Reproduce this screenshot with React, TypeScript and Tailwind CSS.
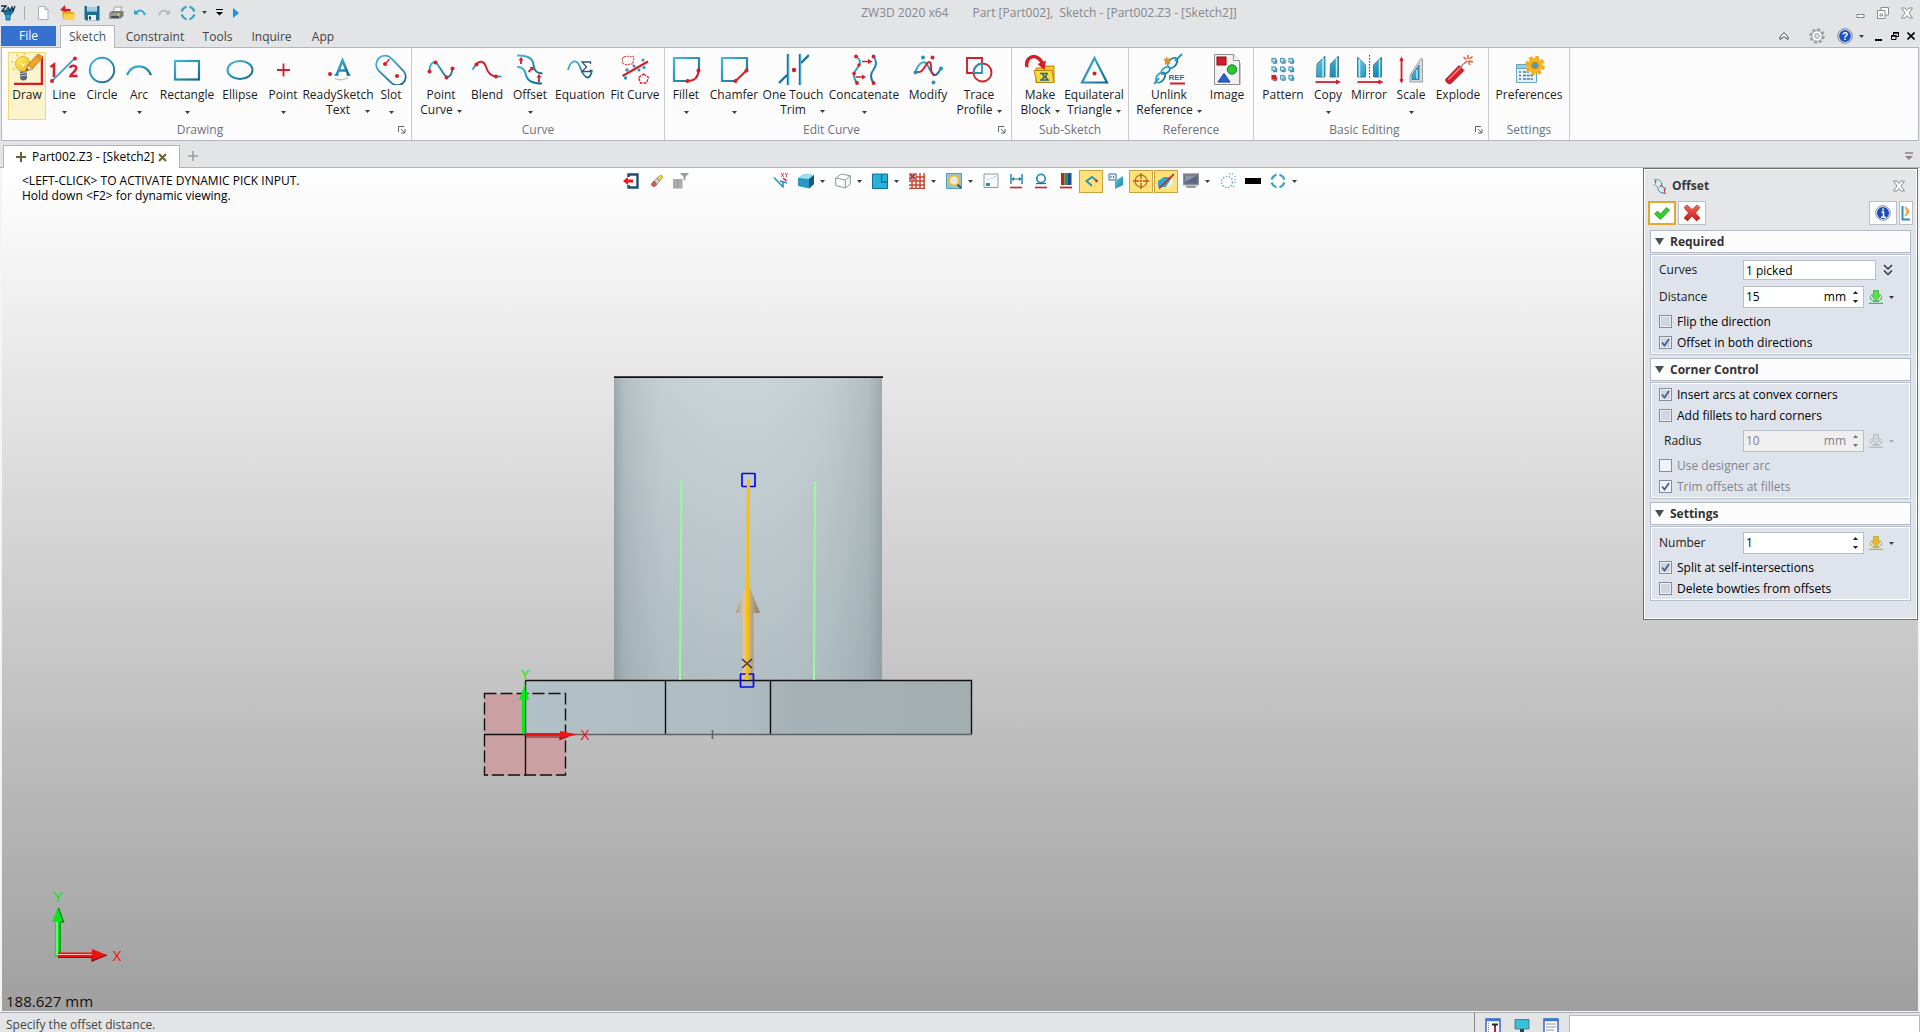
import React from "react";

type IconProps = { children: React.ReactNode; size?: string; box?: string };

const Icon = ({ children, size = "h-8 w-8", box = "0 0 32 32" }: IconProps) => (
  <svg viewBox={box} className={`${size} shrink-0`} fill="none" aria-hidden="true">
    {children}
  </svg>
);

const Caret = ({ className = "" }: { className?: string }) => (
  <svg viewBox="0 0 5 3" className={`h-[3px] w-[5px] shrink-0 ${className}`} aria-hidden="true">
    <path d="M0 0h5L2.500 3z" fill="#3c3c3c" />
  </svg>
);

const T = "#2b93b8";
const D = "#1f7496";
const R = "#d31f2b";

const GradientDefs = () => (
  <svg className="absolute h-0 w-0" aria-hidden="true">
    <defs>
      <linearGradient id="teal" x1="0" y1="0" x2="1" y2="1">
        <stop offset="0" stopColor="#3fb9df" />
        <stop offset="1" stopColor="#17678b" />
      </linearGradient>
      <linearGradient id="cyanFill" x1="0" y1="0" x2="1" y2="1">
        <stop offset="0" stopColor="#63cdea" />
        <stop offset="1" stopColor="#0f80aa" />
      </linearGradient>
      <linearGradient id="yellowFill" x1="0" y1="0" x2="1" y2="1">
        <stop offset="0" stopColor="#fff26b" />
        <stop offset="1" stopColor="#eeb51c" />
      </linearGradient>
      <linearGradient id="redFill" x1="0" y1="0" x2="0" y2="1">
        <stop offset="0" stopColor="#f76a5c" />
        <stop offset="1" stopColor="#c81414" />
      </linearGradient>
    </defs>
  </svg>
);

/* ---------- ribbon icons ---------- */

const DrawIcon = () => (
  <Icon>
    <path d="M3 31h28V3" stroke={R} strokeWidth="2.500" />
    <path d="M7 3.500L5.500 1M13 2l.5-2M3 9H0M4 15l-2.500 1.500M21 7l2-1" stroke="#f0c419" strokeWidth="1.200" />
    <circle cx="12" cy="11" r="7.500" fill="url(#yellowFill)" stroke="#d9a514" strokeWidth=".8" />
    <path d="M9 18.500h7V24a3.500 3.500 0 0 1-7 0z" fill="#5b6670" />
    <path d="M9 20.500l7-1M9 23l7-1" stroke="#b9c2c8" />
    <path d="M15 18l2-6L27 1l5 3-11 12z" fill="#f4a322" stroke="#b4651a" strokeWidth=".8" />
    <path d="M15 18l2-6 5 4z" fill="#f7d9a8" stroke="#a46a24" strokeWidth=".6" />
    <path d="M27 1l5 3-2.500 3-5-3.200z" fill="#e88d2a" />
    <path d="M15 18l1-2.500 1.500 1.200z" fill="#333" />
    <path d="M10 10l2 3 2-3" stroke="#fffbd8" strokeWidth="1.200" />
  </Icon>
);

const LineIcon = () => (
  <Icon>
    <path d="M4 28L27 5" stroke={T} strokeWidth="1.600" />
    <circle cx="4" cy="28" r="2" fill={R} />
    <circle cx="27" cy="5.500" r="2" fill={R} />
    <path d="M2.500 14l3.500-2.500V24" stroke={R} strokeWidth="2.600" />
    <path d="M22 15c1-3.500 6.500-3 6.200.4C28 18 24 20 22.500 23H29.500" stroke={R} strokeWidth="2.400" />
  </Icon>
);

const CircleIcon = () => (
  <Icon><circle cx="16" cy="17" r="12.200" stroke="url(#teal)" strokeWidth="2" /></Icon>
);
const ArcIcon = () => (
  <Icon><path d="M4 22C9 10.500 23 10.500 28 22" stroke="url(#teal)" strokeWidth="2.200" /></Icon>
);
const RectIcon = () => (
  <Icon><rect x="4" y="8" width="24" height="18.500" stroke="url(#teal)" strokeWidth="2.200" /></Icon>
);
const EllipseIcon = () => (
  <Icon><ellipse cx="16" cy="17" rx="12.500" ry="9" stroke="url(#teal)" strokeWidth="2" /></Icon>
);
const PointIcon = () => (
  <Icon><path d="M10 17h13M16.500 10.500v13" stroke={R} strokeWidth="1.800" /></Icon>
);
const ReadyTextIcon = () => (
  <Icon>
    <circle cx="8" cy="21" r="2" fill={R} />
    <path d="M14.500 22L20.500 7.500L26.500 22M16.500 17.500h8" stroke="url(#teal)" strokeWidth="2.600" />
    <path d="M12.500 22h4M24.500 22h4" stroke={D} strokeWidth="1.500" />
    <path d="M13 25.500c5 2.500 9 1.500 13-1" stroke="#b8b8b8" strokeWidth="1.200" />
  </Icon>
);
const SlotIcon = () => (
  <Icon>
    <path d="M3.500 17.500A8.200 8.200 0 0 1 16.500 5.500L28.500 18A8.200 8.200 0 0 1 16 29.500z" stroke="url(#teal)" strokeWidth="1.800" />
    <circle cx="10" cy="11" r="2" fill={R} />
    <circle cx="22" cy="23" r="2" fill={R} />
    <path d="M11 10l3.500-4" stroke={R} strokeWidth="1.200" />
  </Icon>
);
const PointCurveIcon = () => (
  <Icon>
    <path d="M4.500 18C5 8 10 7.500 13 12S20 24.500 22.500 24S27 20 27.500 15.500" stroke="url(#teal)" strokeWidth="2" />
    <circle cx="4.500" cy="18.500" r="2" fill={R} /><circle cx="10.500" cy="9.500" r="2" fill={R} />
    <circle cx="21.500" cy="24.500" r="2" fill={R} /><circle cx="27.500" cy="15.500" r="2" fill={R} />
  </Icon>
);
const BlendIcon = () => (
  <Icon>
    <path d="M1.500 16.500L5 11.500" stroke={T} strokeWidth="1.800" />
    <path d="M25 23.500h5.500" stroke={T} strokeWidth="1.800" />
    <path d="M5 11.500C9 7 13 8 15 14s5 9.500 10.500 9.500" stroke={R} strokeWidth="2" />
    <circle cx="5.500" cy="11.500" r="2" fill={R} /><circle cx="25" cy="23.500" r="2" fill={R} />
  </Icon>
);
const OffsetIcon = ({ size }: { size?: string }) => (
  <Icon size={size}>
    <path d="M3 2.500C14 2 19 6 19.500 12S23 20.500 28.500 20.500" stroke="url(#teal)" strokeWidth="2" />
    <path d="M3 14C9 13.500 11 17 12 22s5 8.500 16 8.500" stroke="url(#teal)" strokeWidth="2" />
    <path d="M7 11V6M14.500 19l4-4M25 29v-6" stroke={R} strokeWidth="1.800" />
    <path d="M4.500 7.500L7 4l2.500 3.500zM15.500 14h4v4zM22.500 24.500L25 21l2.500 3.500z" fill={R} />
  </Icon>
);
const EquationIcon = () => (
  <Icon>
    <path d="M4 17C7 6 13 6.500 15.500 13S21 24.500 23.500 24.500S27.500 20 28 17" stroke="url(#teal)" strokeWidth="1.800" />
    <path d="M26.500 11V9H18l4.500 5L18 18.500h8.500v-2" stroke="#33566e" strokeWidth="1.300" />
  </Icon>
);
const FitCurveIcon = () => (
  <Icon>
    <path d="M3.500 23L29 8.500" stroke={R} strokeWidth="2.200" />
    <path d="M5 4l3-1 3 1 3-1 1 3-1 2 0 3-3 0-3 1-3-1-2-1 1-3-1-2z" stroke={R} strokeWidth="1" strokeDasharray="2 1" />
    <path d="M24.500 21l5 3.500-2 5.500h-6l-2-5.500z" stroke={R} strokeWidth="1.300" strokeDasharray="3 1" />
    <g fill={T}>
      <circle cx="8" cy="17" r="1.700" /><circle cx="6.500" cy="25" r="1.700" /><circle cx="15" cy="13" r="1.500" />
      <circle cx="24" cy="7" r="1.500" /><circle cx="20" cy="17" r="1.500" /><circle cx="25" cy="14.500" r="1.500" />
    </g>
  </Icon>
);
const FilletIcon = () => (
  <Icon>
    <path d="M17.500 28H4V5h25v13" stroke="url(#teal)" strokeWidth="2.200" />
    <path d="M17 28c7 0 11.500-3 11.500-11" stroke={R} strokeWidth="2" />
    <circle cx="17.500" cy="28" r="2" fill={R} /><circle cx="28.500" cy="17.500" r="2" fill={R} />
  </Icon>
);
const ChamferIcon = () => (
  <Icon>
    <path d="M17.500 28H4V5h25v13" stroke="url(#teal)" strokeWidth="2.200" />
    <path d="M17.500 28l11-10.500" stroke={R} strokeWidth="2" />
    <circle cx="17.500" cy="28" r="2" fill={R} /><circle cx="28.500" cy="17.500" r="2" fill={R} />
  </Icon>
);
const TrimIcon = () => (
  <Icon>
    <path d="M11 1v31M23 1v31M2 30l8-8M24 10l8-8" stroke={D} strokeWidth="2.400" />
    <path d="M11.500 1v31M23.500 1v31" stroke="#57c3e2" strokeWidth=".7" />
    <circle cx="17" cy="17" r="2.200" fill={R} />
  </Icon>
);
const ConcatenateIcon = () => (
  <Icon>
    <path d="M8 3.500c4 3 5 5 3 9s-5 5-5 9 1 6 3 8.500M25.500 3.500c4 5 3 9 0 13s-4 8 0 13.500" stroke="url(#teal)" strokeWidth="2" />
    <path d="M14 8.500h8M8 24h7" stroke={R} strokeWidth="1.500" />
    <path d="M20 6l4.500 2.500L20 11zM14 21.500l4 2.500-4 2.500z" fill={R} />
    <g fill={R}>
      <circle cx="8" cy="3.500" r="1.900" /><circle cx="25.500" cy="3.500" r="1.900" /><circle cx="11" cy="12" r="1.800" />
      <circle cx="6" cy="20.500" r="1.800" /><circle cx="9" cy="30" r="1.900" /><circle cx="25.500" cy="30" r="1.900" />
    </g>
  </Icon>
);
const ModifyIcon = () => (
  <Icon>
    <path d="M3.500 19C7 8 13 7 16 13s6 11 9 8 3-4 4-6" stroke="url(#teal)" strokeWidth="2" />
    <path d="M4.500 19C9 20 11 17 14 12s5-3 5 1 0 7 3.500 10" stroke={R} strokeWidth="1.800" />
    <g fill={T}>
      <circle cx="11" cy="4.500" r="2" /><circle cx="3.500" cy="19.500" r="2" /><circle cx="29" cy="15.500" r="2" /><circle cx="21.500" cy="29.500" r="2" />
    </g>
    <circle cx="20.500" cy="4.500" r="2" fill={R} />
  </Icon>
);
const TraceIcon = () => (
  <Icon>
    <path d="M19 10.500V5H4v15h6" stroke={R} strokeWidth="1.900" />
    <circle cx="19.500" cy="19.500" r="9" stroke={R} strokeWidth="1.900" />
    <path d="M19 10.500V20h-8.500c0-5 4-9.500 8.500-9.500z" stroke={T} strokeWidth="1.800" />
  </Icon>
);
const BlockIcon = () => (
  <Icon>
    <path d="M12 15h6v-2h12v16.500H12z" fill="#f6c520" stroke="#b5860f" />
    <path d="M10 17.500h18l2 12H13z" fill="#ffd83a" stroke="#b5860f" />
    <path d="M16 20.500h8M16 27h9M18.500 20.500c0 4 5 3 5 6.500M23 20.500c0 4-5 3-5 6.500" stroke="#1e6e92" strokeWidth="1.500" />
    <path d="M3 14C1 5 9 1.500 14 5c3 2 4 4 4.500 6" stroke={R} strokeWidth="3.400" />
    <path d="M13.500 11l7 6L22 7.500z" fill={R} />
  </Icon>
);
const TriangleIcon = () => (
  <Icon>
    <path d="M16.500 5L29 29.500H4z" stroke="url(#teal)" strokeWidth="2.200" />
    <circle cx="16.500" cy="20.500" r="2" fill={R} />
  </Icon>
);
const UnlinkIcon = () => (
  <Icon>
    <g stroke="url(#teal)" strokeWidth="1.800">
      <ellipse cx="7.500" cy="24.500" rx="6" ry="3.600" transform="rotate(-50 7.500 24.500)" />
      <ellipse cx="12.500" cy="17.500" rx="5" ry="2.800" transform="rotate(-35 12.500 17.500)" />
      <ellipse cx="19.500" cy="10" rx="6" ry="3.800" transform="rotate(-50 19.500 10)" />
      <path d="M22 8l7-7" /><path d="M1 31l5-6" />
    </g>
    <path d="M13.500 3l1.500 3 3-1.500-1.500 3.500 1 3-3.500-.5-2 2v-4l-2-3 3 .5z" fill="#f28a1e" />
    <text x="15.500" y="27" fontFamily="Liberation Sans" fontWeight="700" fontSize="8" fill={D}>REF</text>
    <path d="M17 30.500h15" stroke={R} strokeWidth="2" />
  </Icon>
);
const ImageIcon = () => (
  <Icon>
    <path d="M3.500 1.500h19l6 6v24h-25z" fill="#f2f2f2" stroke="#8f8f8f" />
    <path d="M22.500 1.500v6h6" fill="#fff" stroke="#8f8f8f" />
    <path d="M29.500 10v22.500h-23" stroke="#c9c9c9" />
    <rect x="6" y="4" width="9" height="8" fill="#cf1e2c" stroke="#8e1019" />
    <circle cx="21" cy="16.500" r="4.700" fill="#2bc636" stroke="#16801e" />
    <path d="M13 20.500l6 8.500H7z" fill="#2b63d0" stroke="#163f94" />
  </Icon>
);
const PatternIcon = () => (
  <Icon>
    {[0, 1, 2].map((r) =>
      [0, 1, 2].map((c) => {
        const hot = r === 2 && c === 0;
        return (
          <g key={`${r}${c}`}>
            <rect x={5 + c * 8.5} y={5.5 + r * 8.5} width="3.500" height="3.500" fill={hot ? R : "#c5ebf8"} stroke={hot ? R : "#4f9fba"} strokeWidth="1.200" />
            <path d={`M${6 + c * 8.5} ${10.2 + r * 8.5}h3.700v-3.700`} stroke={hot ? "#a31620" : "#35718a"} strokeWidth="1" />
          </g>
        );
      })
    )}
  </Icon>
);
const CopyIcon = () => (
  <Icon>
    <path d="M5 11l8-8v21H4.500zM18.500 11l8-8v21h-8.500z" fill="url(#cyanFill)" stroke="#2c7089" strokeWidth=".8" />
    <path d="M11 5v19M24.500 5v19" stroke="#bfeaf7" strokeWidth="1.500" />
    <path d="M3.500 29h22" stroke={R} strokeWidth="1.800" />
    <path d="M24 26.500l5 2.500-5 2.500z" fill={R} />
  </Icon>
);
const MirrorIcon = () => (
  <Icon>
    <path d="M4.500 4l8 8v12h-8zM28.500 4l-8 8v12h8z" fill="url(#cyanFill)" stroke="#2c7089" strokeWidth=".8" />
    <path d="M6.500 6.500V24M26.500 6.500V24" stroke="#bfeaf7" strokeWidth="1.500" />
    <path d="M16.500 2v24" stroke="#333" strokeDasharray="1.500 1.500" />
    <path d="M4.500 29h22" stroke={R} strokeWidth="1.800" />
    <path d="M25.500 26.500l5 2.500-5 2.500z" fill={R} />
  </Icon>
);
const ScaleIcon = () => (
  <Icon>
    <path d="M6.500 5v24" stroke={R} strokeWidth="1.800" />
    <path d="M4.500 8l2-4.500 2 4.500zM4.500 26l2 4.500 2-4.500z" fill={R} />
    <path d="M26 5.500L15 22v7h12.500V6z" fill="#d4d8da" stroke="#9aa2a6" />
    <path d="M24 12l-7 10v4.500h7z" fill="url(#cyanFill)" stroke="#2c7089" strokeWidth=".8" />
    <path d="M22 17v9" stroke="#bfeaf7" strokeWidth="1.400" />
  </Icon>
);
const ExplodeIcon = () => (
  <Icon>
    <path d="M4 26L17 12.500l5 5L9 30.500c-2 1.500-6.500-2-5-4.500z" fill="#d8202c" stroke="#8e1019" strokeWidth=".8" />
    <path d="M6.500 26.500l12-12" stroke="#ff8a86" strokeWidth="1.400" />
    <path d="M19 14.500c1-3 2-4 4.500-5" stroke="#777" strokeWidth="1.200" />
    <path d="M26 2v4M30.500 3.500L27.500 6M31 9l-4-1M28 12l-2-4M21.500 4l3 2.500M23 10l2-2" stroke="#f0562a" strokeWidth="1.500" />
  </Icon>
);
const PreferencesIcon = () => (
  <Icon>
    <path d="M3.500 11.500h20v18h-20z" fill="#e4f3fa" stroke="#6aa6c0" />
    <path d="M3.500 11.500h20v4h-20z" fill="#8fd0ea" stroke="#6aa6c0" />
    <path d="M6 19h2M6 22.500h2M6 26h2M10 19h6M10 22.500h10M10 26h10" stroke="#537a95" strokeWidth="1.600" strokeDasharray="3 .8" />
    <circle cx="22" cy="12.500" r="8" stroke="#f2aa1b" strokeWidth="3.500" strokeDasharray="3.800 2.480" />
    <circle cx="22" cy="12.500" r="5.300" fill="#fff" stroke="#f6b21f" strokeWidth="4.500" />
    <circle cx="22" cy="12.500" r="3.200" fill="#4aa0c6" stroke="#c87e10" strokeWidth=".8" />
  </Icon>
);

/* ---------- ribbon ---------- */

type Tool = {
  name: string;
  w: string;
  icon: React.ReactNode;
  second?: string;
  drop?: "below" | "inline" | "right";
  active?: boolean;
};

type Group = { name: string; w: string; pad: string; launcher?: boolean; tools: Tool[] };

const groups: Group[] = [
  {
    name: "Drawing", w: "w-[410px]", pad: "pl-[6px]", launcher: true,
    tools: [
      { name: "Draw", w: "w-[38px]", icon: <DrawIcon />, active: true },
      { name: "Line", w: "w-9", icon: <LineIcon />, drop: "below" },
      { name: "Circle", w: "w-10", icon: <CircleIcon /> },
      { name: "Arc", w: "w-[34px]", icon: <ArcIcon />, drop: "below" },
      { name: "Rectangle", w: "w-[62px]", icon: <RectIcon />, drop: "below" },
      { name: "Ellipse", w: "w-11", icon: <EllipseIcon /> },
      { name: "Point", w: "w-[42px]", icon: <PointIcon />, drop: "below" },
      { name: "ReadySketch", w: "w-[68px]", icon: <ReadyTextIcon />, second: "Text", drop: "right" },
      { name: "Slot", w: "w-[38px]", icon: <SlotIcon />, drop: "below" },
    ],
  },
  {
    name: "Curve", w: "w-[253px]", pad: "pl-[7px]",
    tools: [
      { name: "Point", w: "w-11", icon: <PointCurveIcon />, second: "Curve", drop: "inline" },
      { name: "Blend", w: "w-12", icon: <BlendIcon /> },
      { name: "Offset", w: "w-[38px]", icon: <OffsetIcon />, drop: "below" },
      { name: "Equation", w: "w-[62px]", icon: <EquationIcon /> },
      { name: "Fit Curve", w: "w-12", icon: <FitCurveIcon /> },
    ],
  },
  {
    name: "Edit Curve", w: "w-[347px]", pad: "pl-[5px]", launcher: true,
    tools: [
      { name: "Fillet", w: "w-8", icon: <FilletIcon />, drop: "below" },
      { name: "Chamfer", w: "w-16", icon: <ChamferIcon />, drop: "below" },
      { name: "One Touch", w: "w-[54px]", icon: <TrimIcon />, second: "Trim", drop: "right" },
      { name: "Concatenate", w: "w-[88px]", icon: <ConcatenateIcon />, drop: "below" },
      { name: "Modify", w: "w-10", icon: <ModifyIcon /> },
      { name: "Trace", w: "w-[62px]", icon: <TraceIcon />, second: "Profile", drop: "inline" },
    ],
  },
  {
    name: "Sub-Sketch", w: "w-[117px]", pad: "pl-[6px]",
    tools: [
      { name: "Make", w: "w-11", icon: <BlockIcon />, second: "Block", drop: "inline" },
      { name: "Equilateral", w: "w-16", icon: <TriangleIcon />, second: "Triangle", drop: "inline" },
    ],
  },
  {
    name: "Reference", w: "w-[125px]", pad: "pl-[6px]",
    tools: [
      { name: "Unlink", w: "w-[68px]", icon: <UnlinkIcon />, second: "Reference", drop: "inline" },
      { name: "Image", w: "w-12", icon: <ImageIcon /> },
    ],
  },
  {
    name: "Basic Editing", w: "w-[235px]", pad: "pl-[3px]", launcher: true,
    tools: [
      { name: "Pattern", w: "w-[52px]", icon: <PatternIcon /> },
      { name: "Copy", w: "w-[38px]", icon: <CopyIcon />, drop: "below" },
      { name: "Mirror", w: "w-11", icon: <MirrorIcon /> },
      { name: "Scale", w: "w-10", icon: <ScaleIcon />, drop: "below" },
      { name: "Explode", w: "w-[54px]", icon: <ExplodeIcon /> },
    ],
  },
  {
    name: "Settings", w: "w-[81px]", pad: "pl-0",
    tools: [{ name: "Preferences", w: "w-20", icon: <PreferencesIcon /> }],
  },
];

const ToolButton = ({ t }: { t: Tool }) => (
  <button
    type="button"
    className={`flex h-[68px] shrink-0 flex-col items-center leading-[15px] text-[#1c1c1c] ${t.w} ${
      t.active ? "border border-[#f3d778] bg-[#fdf3cd]" : "pt-px"
    }`}
  >
    {t.icon}
    <span className="mt-[2px] whitespace-nowrap">{t.name}</span>
    {t.drop === "below" && <Caret className="mt-[9px]" />}
    {t.drop === "inline" && (
      <span className="flex items-center gap-1 whitespace-nowrap">
        {t.second}
        <Caret className="mt-1" />
      </span>
    )}
    {t.drop === "right" && (
      <span className="grid w-16 grid-cols-[1fr_auto_1fr] items-center">
        <span />
        {t.second}
        <Caret className="mt-1 justify-self-end" />
      </span>
    )}
  </button>
);

const Ribbon = () => (
  <div className="mx-px flex h-[94px] shrink-0 border border-[#b3b7bd] bg-[#fcfcfc]">
    {groups.map((g) => (
      <section key={g.name} className={`flex shrink-0 flex-col border-r border-[#c8cacf] pt-[4px] ${g.w}`}>
        <div className={`flex ${g.pad}`}>
          {g.tools.map((t) => (
            <ToolButton key={t.name} t={t} />
          ))}
        </div>
        <div className="mt-[2px] flex items-center leading-[15px] text-[#6b7284]">
          <span className="flex-1 text-center">{g.name}</span>
          {g.launcher && (
            <button type="button" aria-label={`${g.name} options`} className="mr-[5px] flex w-2 justify-center">
              <Icon size="h-2 w-2" box="0 0 8 8">
                <path d="M.5 6V.5H6M3 3l3.500 3.500M7 3v4H3" stroke="#5b5f66" />
              </Icon>
            </button>
          )}
        </div>
      </section>
    ))}
  </div>
);

/* ---------- title bar ---------- */

const Brackets = () => (
  <Icon size="h-4 w-4" box="0 0 16 16">
    <path d="M1.500 6.500C2.500 4 4 2.500 6.500 1.500M9.500 1.500C12 2.500 13.500 4 14.500 6.500M14.500 9.500C13.500 12 12 13.500 9.500 14.500M6.500 14.500C4 13.500 2.500 12 1.500 9.500" stroke="#3aa5c8" strokeWidth="2.200" />
  </Icon>
);

const OutlineX = () => (
  <Icon size="h-3 w-3" box="0 0 12 12">
    <path d="M.5 1h3.500L6 3.500 8 1h3.500L8 6l3.500 5H8L6 8.500 4 11H.5L4 6z" fill="#fff" stroke="#8b8b8b" />
  </Icon>
);

const TitleBar = () => (
  <header className="flex h-[25px] shrink-0 items-center">
    <div className="flex h-6 w-[245px] shrink-0 items-center">
      <Icon size="h-4 w-4" box="0 0 16 16">
        <path d="M1 3l4 4 2-5 3 4 5-3-2 5-4 3-5-2z" fill="#1a79a8" />
        <path d="M1 1h5L2 6h5M8 2l2 4 2-4 1 4 2-5" stroke="#0e2f4a" strokeWidth="1.300" />
        <path d="M5 9h6l-1 3v3H6v-3z" fill="#2aa7d8" stroke="#0e4a70" strokeWidth=".8" />
      </Icon>
      <span className="ml-2 h-[14px] w-px bg-[#a9adb3]" />
      <button type="button" aria-label="New" className="ml-[10px] w-4">
        <Icon size="h-4 w-4" box="0 0 16 16">
          <path d="M3.500 1.500h6.500l3 3v10H3.500z" fill="#fff" stroke="#a9b0b8" />
          <path d="M10 1.500v3h3" stroke="#a9b0b8" />
        </Icon>
      </button>
      <button type="button" aria-label="Open" className="ml-[9px] w-4">
        <Icon size="h-4 w-4" box="0 0 16 16">
          <path d="M2 6h5l1 1h6v7H3z" fill="#e9a51c" />
          <path d="M4 9h11.500L14 15H3z" fill="#ffd04a" />
          <path d="M10.500 5.500C8 5 6.500 4.500 5 5.500" stroke={R} strokeWidth="2.600" />
          <path d="M0 5l5-5 1 7z" fill={R} />
        </Icon>
      </button>
      <button type="button" aria-label="Save" className="ml-2 w-4">
        <Icon size="h-4 w-4" box="0 0 16 16">
          <path d="M.5 1h15v14.500H2L.5 14z" fill="#1c6d94" />
          <path d="M3 1h10v5.500H3z" fill="#cfe2ec" /><path d="M3.500 3h9M3.500 5h9" stroke="#8bb0c4" />
          <path d="M4 10h8v5.500H4z" fill="#e9eef1" /><path d="M5 11.500h2v3H5z" fill="#183c52" />
        </Icon>
      </button>
      <button type="button" aria-label="Print" className="ml-2 w-4">
        <Icon size="h-4 w-4" box="0 0 16 16">
          <path d="M5 7l2-5h7l-2 5z" fill="#f6f6f6" stroke="#8f8f8f" strokeWidth=".8" />
          <path d="M1 8l3-2h11.500v5L12 14H1z" fill="#7d7d7d" /><path d="M1 8h11v6H1z" fill="#989898" />
          <path d="M3 11h8v2H3z" fill="#4d4d4d" /><circle cx="10.500" cy="9.500" r="1" fill="#f3e234" />
        </Icon>
      </button>
      <button type="button" aria-label="Undo" className="ml-2 w-4">
        <Icon size="h-4 w-4" box="0 0 16 16">
          <path d="M4 8C6.500 4.500 11 4.500 13 10" stroke="#3ba3c6" strokeWidth="2" /><path d="M2 4.500v5h5z" fill="#3ba3c6" />
        </Icon>
      </button>
      <button type="button" aria-label="Redo" className="ml-2 w-4">
        <Icon size="h-4 w-4" box="0 0 16 16">
          <path d="M12 8C9.500 4.500 5 4.500 3 10" stroke="#b6b9bd" strokeWidth="2" /><path d="M14 4.500v5H9z" fill="#b6b9bd" />
        </Icon>
      </button>
      <button type="button" aria-label="Regenerate" className="ml-2 flex items-center gap-[6px]">
        <Brackets />
        <Caret />
      </button>
      <button type="button" aria-label="Customize" className="ml-[9px] w-[7px]">
        <Icon size="h-[7px] w-[7px]" box="0 0 7 7"><path d="M0 .5h7" stroke="#000" /><path d="M0 3h7L3.500 6.500z" fill="#000" /></Icon>
      </button>
      <button type="button" aria-label="Run" className="ml-[10px] w-[6px]">
        <Icon size="h-[10px] w-[6px]" box="0 0 6 10"><path d="M0 0l6 5-6 5z" fill="#1794e8" /></Icon>
      </button>
    </div>
    <h1 className="flex flex-1 justify-center gap-6 text-[#85888c]">
      <span>ZW3D 2020 x64</span>
      <span className="whitespace-pre">Part [Part002],  Sketch - [Part002.Z3 - [Sketch2]]</span>
    </h1>
    <div className="flex h-6 shrink-0 items-center gap-3 pr-[7px]">
      <button type="button" aria-label="Minimize">
        <Icon size="h-3 w-3" box="0 0 12 12"><rect x="4" y="7.500" width="7" height="3" fill="#fff" stroke="#8b8b8b" /></Icon>
      </button>
      <button type="button" aria-label="Restore">
        <Icon size="h-3 w-3" box="0 0 12 12">
          <path d="M4 .5h7.500V8H4z" fill="#fff" stroke="#8b8b8b" /><path d="M.5 3.500h7.500v8H.5z" fill="#fff" stroke="#8b8b8b" /><path d="M3 7h2.500v2H3z" stroke="#8b8b8b" />
        </Icon>
      </button>
      <button type="button" aria-label="Close"><OutlineX /></button>
    </div>
  </header>
);

const tabs = [
  { name: "Constraint", w: "w-20" },
  { name: "Tools", w: "w-[45px]" },
  { name: "Inquire", w: "w-[63px]" },
  { name: "App", w: "w-10" },
];

const TabRow = () => (
  <nav className="flex h-[22px] shrink-0 items-end pl-px">
    <button type="button" className="mb-px h-5 w-[55px] bg-[#3671d0] text-white">File</button>
    <button type="button" className="relative z-10 -mb-px ml-1 h-[23px] w-[55px] border border-b-0 border-[#b3b7bd] bg-[#fcfcfc] text-[#44546a]">
      Sketch
    </button>
    {tabs.map((t) => (
      <button key={t.name} type="button" className={`h-5 text-center text-[#444] ${t.w}`}>
        {t.name}
      </button>
    ))}
    <div className="mb-[3px] ml-auto flex h-4 items-center pr-[5px]">
      <button type="button" aria-label="Collapse ribbon" className="mr-[20px]">
        <Icon size="h-[10px] w-[10px]" box="0 0 10 10">
          <path d="M1 6L5 1.500 9 6v2.500L5 5.500 1 8.500z" fill="#fff" stroke="#4a4a4a" />
        </Icon>
      </button>
      <button type="button" aria-label="Options" className="mr-[12px]">
        <Icon size="h-4 w-4" box="0 0 16 16">
          <circle cx="8" cy="8" r="6.600" stroke="#9b9b9b" strokeWidth="2.200" strokeDasharray="3 2.180" />
          <circle cx="8" cy="8" r="5.300" fill="#fafafa" stroke="#9b9b9b" /><circle cx="8" cy="8" r="2.300" fill="#e2e4e7" stroke="#9b9b9b" />
        </Icon>
      </button>
      <button type="button" aria-label="Help" className="mr-[11px] flex items-center gap-[6px]">
        <Icon size="h-4 w-4" box="0 0 16 16">
          <circle cx="8" cy="8" r="7.300" fill="#dfe6f2" stroke="#7c8698" /><circle cx="8" cy="8" r="5.900" fill="#1f50c0" />
          <text x="8" y="11.500" textAnchor="middle" fontFamily="Liberation Sans" fontWeight="700" fontSize="10" fill="#fff">?</text>
        </Icon>
        <Caret />
      </button>
      <button type="button" aria-label="Minimize document" className="mr-[9px]">
        <Icon size="h-[10px] w-[7px]" box="0 0 7 10"><path d="M0 9h7" stroke="#000" strokeWidth="2" /></Icon>
      </button>
      <button type="button" aria-label="Restore document" className="mr-2">
        <Icon size="h-2 w-2" box="0 0 8 8"><path d="M2.500 3V.5h5v4H5" stroke="#000" /><path d="M2 1h6M0 4h5.500" stroke="#000" strokeWidth="1.600" /><path d="M.5 3.500h4.500v4H.5z" stroke="#000" /></Icon>
      </button>
      <button type="button" aria-label="Close document">
        <Icon size="h-2 w-2" box="0 0 8 8"><path d="M.5.5l7 7M7.500.5l-7 7" stroke="#000" strokeWidth="1.600" /></Icon>
      </button>
    </div>
  </nav>
);

const DocTabs = () => (
  <div className="flex h-[27px] shrink-0 items-end border-b border-[#aab4bf] pl-[3px]">
    <div className="relative z-10 -mb-px flex h-[23px] items-center border border-b-0 border-[#b3b7bd] bg-white pl-3 pr-3 text-black">
      <Icon size="h-[10px] w-[10px]" box="0 0 10 10"><path d="M0 5h10M5 0v10" stroke="#6d5f36" strokeWidth="2" /></Icon>
      <span className="ml-[6px] whitespace-nowrap">Part002.Z3 - [Sketch2]</span>
      <button type="button" aria-label="Close tab" className="ml-1">
        <Icon size="h-[9px] w-[9px]" box="0 0 9 9"><path d="M1 1l7 7M8 1L1 8" stroke="#6d5f36" strokeWidth="2" /></Icon>
      </button>
    </div>
    <button type="button" aria-label="New tab" className="mb-[6px] ml-2">
      <Icon size="h-[10px] w-[10px]" box="0 0 10 10"><path d="M0 5h10M5 0v10" stroke="#9c9c9c" strokeWidth="1.600" /></Icon>
    </button>
    <button type="button" aria-label="Tab list" className="mb-[7px] ml-auto mr-[7px]">
      <Icon size="h-2 w-2" box="0 0 8 8"><path d="M0 1h8" stroke="#8b8085" strokeWidth="1.500" /><path d="M0 4h8L4 8z" fill="#8b8085" /></Icon>
    </button>
  </div>
);

/* ---------- canvas toolbar ---------- */

const S = ({ children }: { children: React.ReactNode }) => (
  <Icon size="h-4 w-4" box="0 0 16 16">{children}</Icon>
);

type Cmd = { name: string; icon: React.ReactNode; drop?: boolean; on?: boolean };

const leftCmds: Cmd[] = [
  { name: "Exit sketch", icon: <S><path d="M5.500 4V1.500h9v13h-9V12" stroke="#1b4f6b" strokeWidth="2.400" /><path d="M0 8l5-4v2.500h5v3H5V12z" fill="#f5141a" /></S> },
  { name: "Erase", icon: <S><path d="M9 5l4-3 2 2-4 5z" fill="#f3d23c" stroke="#8f7a22" strokeWidth=".6" /><path d="M6 8l3-3 2.500 3.500-3 3z" fill="#cfd4dc" stroke="#777" strokeWidth=".6" /><path d="M3 11.500L6 8l3 3.500-3 2.500z" fill="#d05a4c" stroke="#8a382e" strokeWidth=".6" /></S> },
  { name: "Filter", icon: <S><path d="M0 6h9.500v9.500H0z" fill="#ababab" /><path d="M4.700 6v9.500" stroke="#9a9a9a" /><path d="M7 0h9l-3.500 4v3.500l-2-1V4z" fill="#9c9c9c" /></S> },
];

const rightCmds: Cmd[] = [
  { name: "Align view", icon: <S><path d="M1 4.500l9.500 10M10 14.500V9M7 8l7 2" stroke={T} strokeWidth="1.600" /><path d="M10 5l3.500 3" stroke={R} strokeWidth="1.500" /><path d="M8 0l3 4M11 0L8 4M12 0l1.500 2L15 0M13.500 2v2" stroke={R} strokeWidth=".8" /></S> },
  { name: "Shaded", drop: true, icon: <S><path d="M0 5l6-4 10 1v9l-5 4.500L0 13z" fill="#2a96c2" /><path d="M0 5l6-4 10 1-5 4z" fill="#9adff3" /><path d="M11 6l5-4v9l-5 4.500z" fill="#0f5d83" /></S> },
  { name: "Wireframe", drop: true, icon: <S><path d="M.7 5l5.800-4 8.800 1.800V11l-5 4L.7 12.500zM.7 5l9.600 2 5-4.200M10.300 7v8" stroke="#8498a3" strokeWidth="1" /></S> },
  { name: "View layout", drop: true, icon: <S><path d="M.5 1h15v14.500H.5z" fill="#2bb1d8" stroke="#12719a" /><path d="M9.500 1v8h6" stroke="#12719a" strokeWidth="1.300" /></S> },
  { name: "Grid", drop: true, icon: <S><path d="M0 4h16M0 8h16M0 12h16M3 0v16M7 0v16M11 0v16M15 0v16M0 15.500h16" stroke="#c8442e" strokeWidth="1.500" /><path d="M0 0h7v7H0z" fill="#9aa9b5" /><path d="M1 1l5 5M6 1L1 6" stroke="#c41c27" strokeWidth="1.200" /></S> },
  { name: "Zoom", drop: true, icon: <S><path d="M.5.5h15v15H.5z" fill="#8fc6dd" stroke="#4f9fc0" /><circle cx="8" cy="7.500" r="5" fill="#e4e8ea" stroke="#e8c12c" strokeWidth="2.200" /><path d="M11.500 11.500l3.500 3.500" stroke="#555" strokeWidth="2" /></S> },
  { name: "Window", icon: <S><path d="M1 1h14v13.500H1z" fill="#f6fafc" stroke="#8d9aa3" /><path d="M3 10h4v3H3z" fill="#2391bb" /><path d="M12 3v1.500M5 6v1M9 5v1" stroke="#58a5c2" /></S> },
  { name: "Linear dimension", icon: <S><path d="M3 1v10M14 1v10" stroke={T} strokeWidth="1.600" /><path d="M4 6h9" stroke={D} /><path d="M6 4L3.500 6 6 8zM11 4l2.500 2L11 8z" fill={D} /><path d="M2 14.500h12" stroke={R} strokeWidth="1.600" /></S> },
  { name: "Constraint status", icon: <S><circle cx="8" cy="5.500" r="4.200" stroke={T} strokeWidth="1.800" /><path d="M3 10.500h10" stroke={D} strokeWidth="1.300" /><path d="M2 14.500h12" stroke={R} strokeWidth="1.600" /></S> },
  { name: "Colors", icon: <S><path d="M3 0h3.500v12H3z" fill="#c41f2b" /><path d="M6.500 0H10v12H6.500z" fill="#23993a" /><path d="M10 0h3.500v12H10z" fill="#2347a8" /><path d="M2 14.500h12" stroke={R} strokeWidth="1.800" /></S> },
  { name: "Chain", on: true, icon: <S><path d="M9 13L3.500 8 9 4l5 4" stroke={T} strokeWidth="1.900" /><circle cx="13.500" cy="8" r="1.300" fill={R} /></S> },
  { name: "Project", icon: <S><path d="M1 1h7v6H1z" fill="#eaf6fb" stroke="#2f6f8d" /><path d="M3 3v2M5.500 3v2" stroke="#2f6f8d" /><path d="M7 8l8-5v9l-8 4z" fill="url(#cyanFill)" /></S> },
  { name: "Target", on: true, icon: <S><circle cx="8" cy="8" r="6" stroke="#a98a2c" strokeWidth="1.500" /><path d="M8 0v6M8 10v6M0 8h6M10 8h6" stroke="#c4522a" strokeWidth="1.300" /><circle cx="8" cy="8" r="1" fill={R} /></S> },
  { name: "Section", on: true, icon: <S><path d="M0 8l6-4h8L8 14H0z" fill="#2ba7cf" /><path d="M8 14l7-10v7l-3 3z" fill="#e9f3d8" /><path d="M1 15.500L16 1" stroke={R} strokeWidth="1.700" /></S> },
  { name: "Display", drop: true, icon: <S><path d="M.5 1h15v10.500H.5z" fill="#5c6880" stroke="#8d9199" strokeWidth="1.500" /><path d="M2 2.500h12L2 9z" fill="#8995ab" /><path d="M2 12.500h12L12 15H4z" fill="#9d9d9d" /></S> },
  { name: "Highlight", icon: <S><circle cx="7" cy="9" r="5.500" stroke="#6fb3cb" strokeWidth="1.500" strokeDasharray="1.500 1.500" /><path d="M9 1h4M15 3v7M14 13l-2 2" stroke="#6fb3cb" strokeWidth="1.300" strokeDasharray="1.300 1.600" /></S> },
  { name: "Line width", icon: <S><path d="M0 5h16v6H0z" fill="#000" /></S> },
  { name: "Refresh", drop: true, icon: <Brackets /> },
];

const CmdButton = ({ c }: { c: Cmd }) => (
  <button type="button" aria-label={c.name} className={`flex h-6 shrink-0 items-center ${c.drop ? "w-[37px]" : "w-[25px]"}`}>
    <span className={`flex h-[23px] w-6 items-center justify-center ${c.on ? "border border-[#c9a241] bg-[#ffe37a]" : ""}`}>
      {c.icon}
    </span>
    {c.drop && <Caret className="ml-[2px]" />}
  </button>
);

/* ---------- model ---------- */

const Model = () => (
  <svg className="absolute inset-0 h-full w-full" aria-label="Sketch model" role="img">
    <defs>
      <linearGradient id="cyl" x1="0" x2="1" y1="0" y2="0">
        <stop offset="0" stopColor="#6f7b80" stopOpacity=".5" />
        <stop offset=".04" stopColor="#7f8b90" stopOpacity=".28" />
        <stop offset=".18" stopColor="#8c999e" stopOpacity=".05" />
        <stop offset=".45" stopColor="#ffffff" stopOpacity=".02" />
        <stop offset=".8" stopColor="#8c9a9c" stopOpacity=".1" />
        <stop offset=".95" stopColor="#78868a" stopOpacity=".28" />
        <stop offset="1" stopColor="#6a777b" stopOpacity=".45" />
      </linearGradient>
      <linearGradient id="cylBase" x1="0" x2="0" y1="0" y2="1">
        <stop offset="0" stopColor="#c8d3d7" />
        <stop offset="1" stopColor="#b0bdc2" />
      </linearGradient>
      <linearGradient id="plate" x1="0" x2="1" y1="0" y2="0">
        <stop offset="0" stopColor="#b2c1c7" />
        <stop offset=".5" stopColor="#aebbc0" />
        <stop offset=".6" stopColor="#a5b1b4" />
        <stop offset="1" stopColor="#a2aeaf" />
      </linearGradient>
      <linearGradient id="tan" x1="0" x2="1" y1="0" y2="0">
        <stop offset="0" stopColor="#a8987a" />
        <stop offset=".35" stopColor="#dccba6" />
        <stop offset="1" stopColor="#8b7d64" />
      </linearGradient>
    </defs>
    <rect x="614" y="209" width="268" height="304" fill="url(#cylBase)" />
    <rect x="614" y="209" width="268" height="304" fill="url(#cyl)" />
    <path d="M614 209.200h269" stroke="#111" strokeWidth="1.800" />
    <rect x="526" y="513" width="446" height="54" fill="url(#plate)" />
    <path d="M484 526h41v41h41v41h-82z" fill="#cba0a2" />
    <path d="M525.500 512.500h446v54M665.500 513v53M770.500 513v53M525.500 512.500v95M484 566.500h42" stroke="#111" strokeWidth="1.400" fill="none" />
    <path d="M525 566.500h447M712.500 562v9" stroke="#5f6363" strokeWidth="1.600" fill="none" />
    <path d="M484.500 525.500h81v81.500h-81z" fill="none" stroke="#111" strokeWidth="1.400" strokeDasharray="12 4" />
    <path d="M681.500 312l-1.500 200M815 313l-1 199" stroke="#98fb98" strokeWidth="2" />
    <path d="M748 415l12 30h-6.500v66h-12.500v-66h-5.500z" fill="url(#tan)" />
    <g fill="none" stroke="#0808ee" strokeWidth="1.700">
      <rect x="742" y="305.500" width="13" height="13" rx=".5" />
      <rect x="740.500" y="506" width="13" height="13" rx=".5" />
    </g>
    <path d="M748.500 312L747 512" stroke="#ffbe00" strokeWidth="3" />
    <path d="M742 491l10 9M752 491l-10 9" stroke="#173a55" strokeWidth="1.300" />
    <circle cx="747" cy="495.500" r="1.300" fill="#f11" />
    <path d="M522 566v-34h-3l6-16 4 16h-3v34z" fill="#0ae81c" />
    <path d="M525.500 566v-50" stroke="#0a7d18" strokeWidth="1" />
    <path d="M526 565h34v-2l17 3.500-17 4.500v-3h-34z" fill="#ef1414" />
    <path d="M526 569h34v2.500l8-3" stroke="#8f0d0d" strokeWidth="1.200" fill="none" />
    <text x="525" y="511" textAnchor="middle" fontFamily="Liberation Sans" fontSize="13" fill="#0ce80c">Y</text>
    <text x="585" y="572" textAnchor="middle" fontFamily="Liberation Sans" fontSize="14" fill="#f41414">X</text>
  </svg>
);

const Triad = () => (
  <svg viewBox="0 0 72 76" className="h-[76px] w-[72px]" aria-hidden="true">
    <path d="M5 67V32H2L8 17l6 15h-3.500v35z" fill="#0ae81c" />
    <path d="M10 67V32h3.500L8.500 18" stroke="#087a14" strokeWidth="1.200" fill="none" />
    <path d="M7 32v33" stroke="#c8ffcc" strokeWidth="1" />
    <path d="M8 62.500h34v-3.500l15 6-15 6v-3.500H8z" fill="#ee1111" />
    <path d="M8 67.500h34v3.500l15-6" stroke="#8d0b0b" strokeWidth="1.200" fill="none" />
    <path d="M8 64.500h34" stroke="#ffb4b4" />
    <text x="8" y="12" textAnchor="middle" fontFamily="Liberation Sans" fontSize="14" fill="#0ce80c">Y</text>
    <text x="67" y="71" textAnchor="middle" fontFamily="Liberation Sans" fontSize="14" fill="#f41414">X</text>
  </svg>
);

/* ---------- offset panel ---------- */

const Section = ({ title, pad, children }: { title: string; pad: string; children: React.ReactNode }) => (
  <section className="mb-[3px]">
    <h3 className="flex h-[23px] items-center gap-[6px] border border-[#b4bac4] bg-[#fcfcfd] pl-1 font-bold text-[#333]">
      <svg viewBox="0 0 9 7" className="h-[7px] w-[9px]" aria-hidden="true"><path d="M0 0h9L4.500 7z" fill="#4b5058" /></svg>
      {title}
    </h3>
    <div className={`mt-px flex flex-col border border-[#b9c1ce] px-[7px] pb-px shadow-[inset_0_0_0_1px_#fff] ${pad}`}>{children}</div>
  </section>
);

const Check = ({ label, checked, disabled }: { label: string; checked?: boolean; disabled?: boolean }) => (
  <label className={`flex h-[21px] items-center gap-[5px] pl-px ${disabled ? "text-[#80858c]" : "text-black"}`}>
    <span className="grid h-[13px] w-[13px] place-items-center">
      <input
        type="checkbox"
        defaultChecked={checked}
        disabled={disabled}
        className={`peer col-start-1 row-start-1 h-[13px] w-[13px] appearance-none border border-[#858d99] ${disabled ? "bg-[#f0f2f5]" : "bg-[#d0d5de] shadow-[inset_0_0_0_1px_#eceff4]"}`}
      />
      <svg viewBox="0 0 9 9" className="pointer-events-none col-start-1 row-start-1 h-[9px] w-[9px] opacity-0 peer-checked:opacity-100" aria-hidden="true">
        <path d="M1 4.500l2.500 3L8 1" fill="none" stroke="#41608f" strokeWidth="1.700" />
      </svg>
    </span>
    {label}
  </label>
);

const Spinner = ({ id, value, unit, disabled }: { id: string; value: string; unit?: string; disabled?: boolean }) => (
  <span className={`flex h-[22px] w-[121px] items-center border border-[#b9bec7] pr-1 ${disabled ? "bg-[#efefef] text-[#80858c]" : "bg-white text-black"}`}>
    <input id={id} defaultValue={value} disabled={disabled} className="w-0 flex-1 bg-transparent pl-[2px] outline-none" />
    {unit && <span className="pr-[6px]">{unit}</span>}
    <span className="flex w-[7px] flex-col items-center gap-[6px]">
      <button type="button" aria-label="Increase" disabled={disabled}>
        <svg viewBox="0 0 5 3" className={`h-[3px] w-[5px] ${disabled ? "opacity-60" : ""}`}><path d="M0 3h5L2.500 0z" fill="#222" /></svg>
      </button>
      <button type="button" aria-label="Decrease" disabled={disabled}>
        <svg viewBox="0 0 5 3" className={`h-[3px] w-[5px] ${disabled ? "opacity-60" : ""}`}><path d="M0 0h5L2.500 3z" fill="#222" /></svg>
      </button>
    </span>
  </span>
);

const Variable = ({ line, fill, faded }: { line: string; fill: string; faded?: boolean }) => (
  <button type="button" aria-label="Variable input" disabled={faded} className="ml-[5px] flex items-center gap-[6px]">
    <Icon size="h-[14px] w-[14px]" box="0 0 14 14">
      <path d="M4.500.5h5v4.500h2.500L7 10.500 2 5h2.500z" fill={fill} stroke={line} />
      <path d="M1 6.500c0 6 12 6 12 0M0 13.300h14M4 11.500h6" stroke={line} strokeWidth="1.200" />
    </Icon>
    <Caret className={faded ? "opacity-30" : ""} />
  </button>
);

const OffsetPanel = () => (
  <aside className="absolute right-[2px] top-0 w-[275px] border border-[#6b7076] bg-[#dfe4ec] shadow-[inset_0_0_0_1px_#fff]">
    <div className="mx-px mt-px bg-[#e5e6e8]">
      <div className="flex h-[31px] items-center pl-[7px] pr-[11px]">
        <OffsetIcon size="h-4 w-4" />
        <h2 className="ml-1 flex-1 font-bold text-[#3a3a3a]">Offset</h2>
        <button type="button" aria-label="Close panel"><OutlineX /></button>
      </div>
      <div className="flex h-[29px] items-start gap-[2px] pl-[3px] pr-[3px]">
        <button type="button" aria-label="OK" className="flex h-6 w-7 items-center justify-center border-2 border-[#e3a92e] bg-white">
          <Icon size="h-4 w-4" box="0 0 16 16"><path d="M.5 9L3.500 6l3 3 6-6.500L15.500 5l-9 9.500z" fill="#35cf2c" stroke="#1e9a1c" strokeWidth=".8" /></Icon>
        </button>
        <button type="button" aria-label="Cancel" className="flex h-6 w-7 items-center justify-center border border-[#b9bec7] bg-white">
          <Icon size="h-[18px] w-[18px]" box="0 0 18 18"><path d="M1 3.500L4 1l5 4.500L14 1l3 2.500L12.500 9l4.500 5-3.500 3L9 12l-4.500 5L1 14l4.500-5z" fill="url(#redFill)" stroke="#a81414" strokeWidth=".6" /></Icon>
        </button>
        <button type="button" aria-label="Information" className="ml-auto flex h-6 w-7 items-center justify-center border border-[#b9bec7] bg-white">
          <Icon size="h-4 w-4" box="0 0 16 16">
            <circle cx="8" cy="8" r="7.300" fill="#e4e9f2" stroke="#8893a5" /><circle cx="8" cy="8" r="6" fill="#1c4bb4" />
            <path d="M6.500 7H8.500v5M6 12.200h5M8 3.500v2" stroke="#fff" strokeWidth="1.600" />
          </Icon>
        </button>
        <button type="button" aria-label="Preview" className="flex h-6 w-[14px] items-center justify-center border border-[#b9bec7] bg-white">
          <Icon size="h-4 w-[10px]" box="0 0 10 16"><path d="M1.500 1v13.500H9" stroke={T} strokeWidth="2" /><path d="M3.500 1C6 2 8 5 8.500 7L5 11.500 3.500 11l2-4z" fill="#eda24a" /></Icon>
        </button>
      </div>
    </div>
    <div className="px-[6px] pb-[15px]">
      <Section title="Required" pad="pt-[5px]">
        <div className="flex h-5 items-center">
          <label htmlFor="curves" className="w-[85px] pl-px">Curves</label>
          <input id="curves" defaultValue="1 picked" className="h-5 w-[133px] border border-[#b9bec7] bg-white pl-[2px] text-black outline-none" />
          <button type="button" aria-label="Expand" className="ml-[7px]">
            <Icon size="h-3 w-[10px]" box="0 0 10 12"><path d="M1 1l4 4 4-4M1 6.500l4 4 4-4" stroke="#333" strokeWidth="1.500" /></Icon>
          </button>
        </div>
        <div className="mb-[3px] mt-[6px] flex h-[22px] items-center">
          <label htmlFor="distance" className="w-[85px] pl-px">Distance</label>
          <Spinner id="distance" value="15" unit="mm" />
          <Variable line="#45b851" fill="#5de04c" />
        </div>
        <Check label="Flip the direction" />
        <Check label="Offset in both directions" checked />
      </Section>
      <Section title="Corner Control" pad="pt-px">
        <Check label="Insert arcs at convex corners" checked />
        <Check label="Add fillets to hard corners" />
        <div className="mb-[3px] mt-1 flex h-[22px] items-center">
          <label htmlFor="radius" className="w-[85px] pl-[6px]">Radius</label>
          <Spinner id="radius" value="10" unit="mm" disabled />
          <Variable line="#b7babf" fill="#d4d6da" faded />
        </div>
        <Check label="Use designer arc" disabled />
        <Check label="Trim offsets at fillets" checked disabled />
      </Section>
      <Section title="Settings" pad="pt-[5px]">
        <div className="mb-[3px] flex h-[22px] items-center">
          <label htmlFor="number" className="w-[85px] pl-px">Number</label>
          <Spinner id="number" value="1" />
          <Variable line="#b5b445" fill="#f5b32a" />
        </div>
        <Check label="Split at self-intersections" checked />
        <Check label="Delete bowties from offsets" />
      </Section>
    </div>
  </aside>
);

const StatusBar = () => (
  <footer className="flex h-5 shrink-0 items-start overflow-hidden border-t border-[#a9adb1] text-[#444]">
    <p className="flex-1 whitespace-nowrap pl-[6px] pt-[5px] leading-[14px]">Specify the offset distance.</p>
    <div className="flex h-full shrink-0 gap-[13px] border-l border-[#888c92] pl-[10px] pt-[5px]">
      <button type="button" aria-label="Text" className="h-4">
        <Icon size="h-4 w-4" box="0 0 16 16"><path d="M1 1h14v15H1z" fill="#fff" stroke="#3d68b5" strokeWidth="1.500" /><path d="M1 2h14" stroke="#3d78d5" strokeWidth="2.500" /><path d="M3.500 5v11" stroke="#7e8ea8" strokeDasharray="1 1" /><path d="M7 6.500h6M10 6v9" stroke="#2a2a2a" strokeWidth="1.800" /><path d="M10 9v6" stroke={R} strokeWidth="2" /></Icon>
      </button>
      <button type="button" aria-label="Screen" className="h-4">
        <Icon size="h-4 w-4" box="0 0 16 16"><path d="M1 1.500h14v9.500H1z" fill="#37bfdb" stroke="#5d7a88" /><path d="M6 11h4v3H6zM4 14h8v1.500H4z" fill="#39454d" /></Icon>
      </button>
      <button type="button" aria-label="Log" className="h-4">
        <Icon size="h-4 w-4" box="0 0 16 16"><path d="M1 1h14v15H1z" fill="#fff" stroke="#3d68b5" strokeWidth="1.500" /><path d="M1 2h14" stroke="#3d78d5" strokeWidth="2.500" /><path d="M3 6h10M3 9h10M3 12h8" stroke="#8097b4" /></Icon>
      </button>
    </div>
    <input aria-label="Command" className="ml-[10px] mt-[2px] h-[22px] w-[351px] shrink-0 border border-[#b2bcc8] bg-white px-1" />
  </footer>
);

export default function App() {
  return (
    <div className="flex h-screen flex-col overflow-hidden bg-[#e2e4e6] font-['Open_Sans',sans-serif] text-[12px] leading-4 text-[#1c1c1c]">
      <GradientDefs />
      <TitleBar />
      <TabRow />
      <Ribbon />
      <DocTabs />
      <main className="relative min-h-0 flex-1 border-x-2 border-b border-[#f4f4f4] bg-linear-to-b from-white to-[#a0a0a0]">
        <div className="absolute inset-y-0 -left-[2px] -right-[2px]">
          <Model />
          <p className="absolute left-[22px] top-[5px] leading-[15px] text-black">
            &lt;LEFT-CLICK&gt; TO ACTIVATE DYNAMIC PICK INPUT.
            <br />
            Hold down &lt;F2&gt; for dynamic viewing.
          </p>
          <div className="absolute inset-x-0 top-px flex justify-center pl-[2px]">
            {leftCmds.map((c) => <CmdButton key={c.name} c={c} />)}
            <span className="w-[75px]" />
            {rightCmds.map((c) => <CmdButton key={c.name} c={c} />)}
          </div>
          <div className="absolute bottom-[45px] left-[50px]"><Triad /></div>
          <p className="absolute bottom-0 left-[6px] text-[15px] leading-5 text-[#111]">188.627 mm</p>
          <OffsetPanel />
        </div>
      </main>
      <StatusBar />
    </div>
  );
}
